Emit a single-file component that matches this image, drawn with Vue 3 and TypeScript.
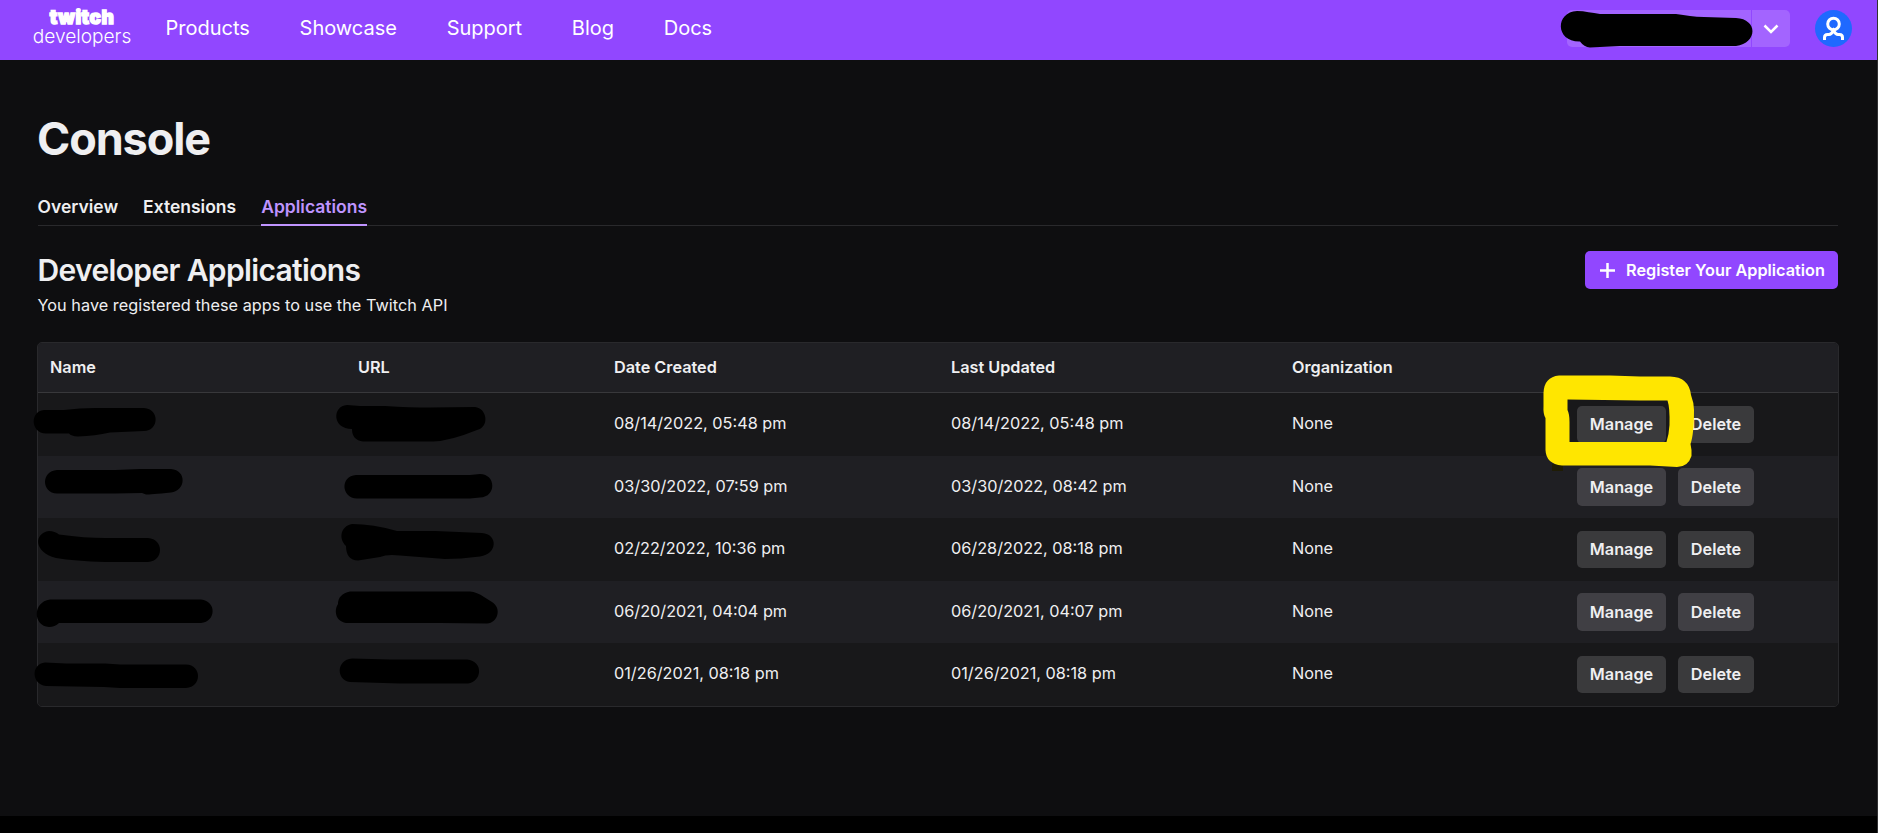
<script setup lang="ts">
interface AppRow {
  created: string
  updated: string
  organization: string
}

const navItems: string[] = ['Products', 'Showcase', 'Support', 'Blog', 'Docs']
const tabs: string[] = ['Overview', 'Extensions', 'Applications']
const activeTab = 'Applications'
const columns: string[] = ['Name', 'URL', 'Date Created', 'Last Updated', 'Organization', '']

const rows: AppRow[] = [
  { created: '08/14/2022, 05:48 pm', updated: '08/14/2022, 05:48 pm', organization: 'None' },
  { created: '03/30/2022, 07:59 pm', updated: '03/30/2022, 08:42 pm', organization: 'None' },
  { created: '02/22/2022, 10:36 pm', updated: '06/28/2022, 08:18 pm', organization: 'None' },
  { created: '06/20/2021, 04:04 pm', updated: '06/20/2021, 04:07 pm', organization: 'None' },
  { created: '01/26/2021, 08:18 pm', updated: '01/26/2021, 08:18 pm', organization: 'None' },
]

// Freehand marker shapes that cover private values
const redactions: string[] = [
  'M1577 11C1585 11 1592 13 1600 14H1676C1686 15 1694 17 1704 17L1736 18C1758 19 1758 43 1736 46L1728 46H1620L1590 47.500Q1584 47 1580 41.500C1555 42 1555 12 1577 11Z',
  'M44 410H64Q80 408 95 408H144C160 409 159 431 144 431L110 432.500Q95 436 78 436.500Q71 436 69 433.500H46C30 433 30 411 44 410Z',
  'M347 405L360 406H385Q410 407.500 430 407.500L475 407C487 408 490 427 477 430Q450 441 433 441.500H363Q352 440 352 429C332 429 332 406 347 405Z',
  'M57 470H115L140 469H171C187 470 186 491 171 492.500Q150 494.500 146 494.500L142 493L115 493.500H57C41 493 41 471 57 470Z',
  'M356 475H470L480 474C496 474 497 497 480 497.500L470 498.500H357C341 498 340 476 356 475Z',
  'M49 531Q55 531 59 534.500Q85 538 105 538H148C164 539 164 561 148 562H105Q75 561 56 558C33 552 34 533 49 531Z',
  'M352 524Q373 524 397 531H435L482 533C498 534 498 554 480 556.500Q460 559 445 559L400 555.500Q387 554 380 557L358 560.500Q346 560 346 546C338 538 341 526 352 524Z',
  'M50 599.500H201C217 601 216 622 201 623H59Q55 627 49 627C33 626 32 602 50 599.500Z',
  'M350 591.500H470Q477 592 484 597L492 602C502 608 498 623 487 623.500L440 623H346C335 621 334 610 338 604Q338 594 350 591.500Z',
  'M45 662.500L66 663.500H105L120 664.500H186C202 665 202 687 186 688H120L104 687L46 686C31 684 31 664 45 662.500Z',
  'M352 658.500L390 659.500H467C484 661 482 682 468 683.500H400L350 682C336 680 336 660 352 658.500Z',
]
</script>

<template>
  <div class="page">
    <header class="topbar">
      <a class="logo">
        <span class="logo-brand">twitch</span>
        <span class="logo-sub">developers</span>
      </a>
      <nav class="nav">
        <a v-for="item in navItems" :key="item">{{ item }}</a>
      </nav>
      <div class="account">
        <div class="account-name"></div>
        <div class="account-toggle">
          <svg width="20" height="20" viewBox="0 0 20 20" fill="none" stroke="#fff" stroke-width="2.500">
            <path d="M3.500 6.500 10 13 16.500 6.500" />
          </svg>
        </div>
      </div>
      <div class="avatar">
        <svg width="37" height="37" viewBox="0 0 37 37" fill="none" stroke="#fff" stroke-width="3">
          <circle cx="18.500" cy="14" r="5.800" />
          <path d="M9.500 30V27.500Q9.500 24.500 12.500 24.500H14Q16.500 24.500 18.500 20.500Q20.500 24.500 23 24.500H24.500Q27.500 24.500 27.500 27.500V30" />
        </svg>
      </div>
    </header>

    <main class="content">
      <h1>Console</h1>
      <div class="tabs">
        <a v-for="tab in tabs" :key="tab" class="tab" :class="{ active: tab === activeTab }">{{ tab }}</a>
      </div>

      <div class="section-head">
        <div>
          <h2>Developer Applications</h2>
          <p>You have registered these apps to use the Twitch API</p>
        </div>
        <button class="register">
          <svg width="15" height="15" viewBox="0 0 15 15" stroke="#fff" stroke-width="2.500">
            <path d="M7.500 0V15M0 7.500H15" />
          </svg>
          <span>Register Your Application</span>
        </button>
      </div>

      <div class="table">
        <div class="row head">
          <div v-for="(column, i) in columns" :key="i" class="cell">{{ column }}</div>
        </div>
        <div v-for="(row, i) in rows" :key="i" class="row body">
          <div></div>
          <div></div>
          <div class="cell">{{ row.created }}</div>
          <div class="cell">{{ row.updated }}</div>
          <div class="cell">{{ row.organization }}</div>
          <div class="actions">
            <button class="manage">Manage</button>
            <button class="delete">Delete</button>
          </div>
        </div>
      </div>
    </main>
    <div class="footer-strip"></div>

    <svg class="marker" width="1878" height="833" viewBox="0 0 1878 833">
      <path v-for="(d, i) in redactions" :key="i" :d="d" />
      <rect x="1552" y="464" width="11" height="7" fill="#1f1c05" />
      <path
        fill="#ffe600"
        fill-rule="evenodd"
        d="M1559 375.500H1610L1640 376.500H1670Q1689 377 1691 395Q1694 403 1694 410Q1694 434 1690.500 444Q1692 450 1691.500 456Q1688 467 1677 467L1650 465.500H1562Q1546 464 1545.500 450V418Q1543 414 1543.500 406V393Q1544 377 1559 375.500ZM1567.500 399.500V410Q1569.500 414 1569.500 422V442H1666.500Q1669 434 1669.500 425Q1670 408 1667.500 400.500L1640 400.500Z"
      />
    </svg>
  </div>
</template>

<style>
html,
body {
  margin: 0;
  background: #000;
  overflow: hidden;
}
</style>

<style scoped>
.page {
  position: relative;
  box-sizing: border-box;
  width: 1878px;
  height: 833px;
  overflow: hidden;
  display: flex;
  flex-direction: column;
  border-right: 1px solid #303032;
  background: #0e0e10;
  color: #efeff1;
  font-family: Inter, 'Liberation Sans', sans-serif;
  font-size: 16.25px;
}
.topbar {
  display: flex;
  align-items: center;
  flex: none;
  box-sizing: border-box;
  height: 60px;
  padding: 0 25px 3px 33px;
  background: #9147ff;
  color: #fff;
}
.logo {
  display: flex;
  flex-direction: column;
  align-items: center;
  width: 98px;
  margin: -4px 34.5px 0 0;
}
.logo-brand {
  font-size: 19px;
  line-height: 18px;
  font-weight: 900;
  letter-spacing: 0.5px;
  -webkit-text-stroke: 1.4px #fff;
}
.logo-sub {
  font-size: 19.1px;
  line-height: 18px;
  font-weight: 300;
}
.nav {
  display: flex;
  gap: 49.7px;
  margin-top: -2px;
  font-size: 20px;
}
.account {
  display: flex;
  gap: 1px;
  margin-left: auto;
  margin-right: 25px;
}
.account-name,
.account-toggle {
  height: 37px;
  background: #a364ff;
}
.account-name {
  width: 184px;
  border-radius: 5px 0 0 5px;
}
.account-toggle {
  display: flex;
  align-items: center;
  justify-content: center;
  width: 38px;
  border-radius: 0 5px 5px 0;
}
.avatar {
  width: 37px;
  height: 37px;
  border-radius: 50%;
  background: #1f69ff;
}
.content {
  flex: 1;
  padding: 0 39px 0 37px;
}
h1 {
  margin: 52px 0 0;
  font-size: 45px;
  line-height: 54px;
  font-weight: 700;
  letter-spacing: -1.1px;
}
.tabs {
  display: flex;
  gap: 25px;
  margin: 25px 0 0 0.5px;
  height: 35px;
  box-sizing: border-box;
  border-bottom: 1px solid #29292c;
  font-size: 17.5px;
  font-weight: 600;
}
.tab {
  height: 33px;
  line-height: 32px;
}
.tab.active {
  border-bottom: 2px solid #bf94ff;
  color: #bf94ff;
}
.section-head {
  display: flex;
  justify-content: space-between;
  align-items: flex-start;
  height: 91px;
  margin: 25px 0 0 0.5px;
}
h2 {
  margin: 0;
  font-size: 30px;
  line-height: 38px;
  font-weight: 600;
  letter-spacing: -0.65px;
}
p {
  margin: 4px 0 0;
  line-height: 24px;
  letter-spacing: 0.03px;
}
button {
  height: 37.5px;
  padding: 0;
  border: 0;
  border-radius: 5px;
  color: #efeff1;
  font: 600 16.25px Inter, 'Liberation Sans', sans-serif;
}
.register {
  display: flex;
  align-items: center;
  gap: 11px;
  width: 253px;
  height: 38px;
  padding: 0 0 0 15px;
  background: #9147ff;
  color: #fff;
  white-space: nowrap;
}
.table {
  width: 1802px;
  box-sizing: border-box;
  overflow: hidden;
  border: 1px solid #29292c;
  border-radius: 5px;
  background: #18181b;
}
.row {
  display: grid;
  grid-template-columns: 308px 256px 337px 341px 285px 1fr;
  align-items: center;
  box-sizing: border-box;
  height: 62.5px;
  padding-left: 12px;
}
.cell {
  padding-bottom: 2px;
}
.head {
  height: 50px;
  border-bottom: 1px solid #38383b;
  background: #1f1f23;
  font-weight: 600;
}
.body {
  background: #18181a;
}
.body:nth-child(odd) {
  background: #1f1f23;
}
.actions {
  display: flex;
  gap: 12px;
}
.actions button {
  background: #3a3a3c;
}
.body:nth-child(odd) .actions button {
  background: #403f44;
}
.manage {
  width: 89px;
}
.delete {
  width: 76px;
}
.footer-strip {
  flex: none;
  height: 17px;
  background: #000;
}
.marker {
  position: absolute;
  top: 0;
  left: 0;
  pointer-events: none;
}
</style>
